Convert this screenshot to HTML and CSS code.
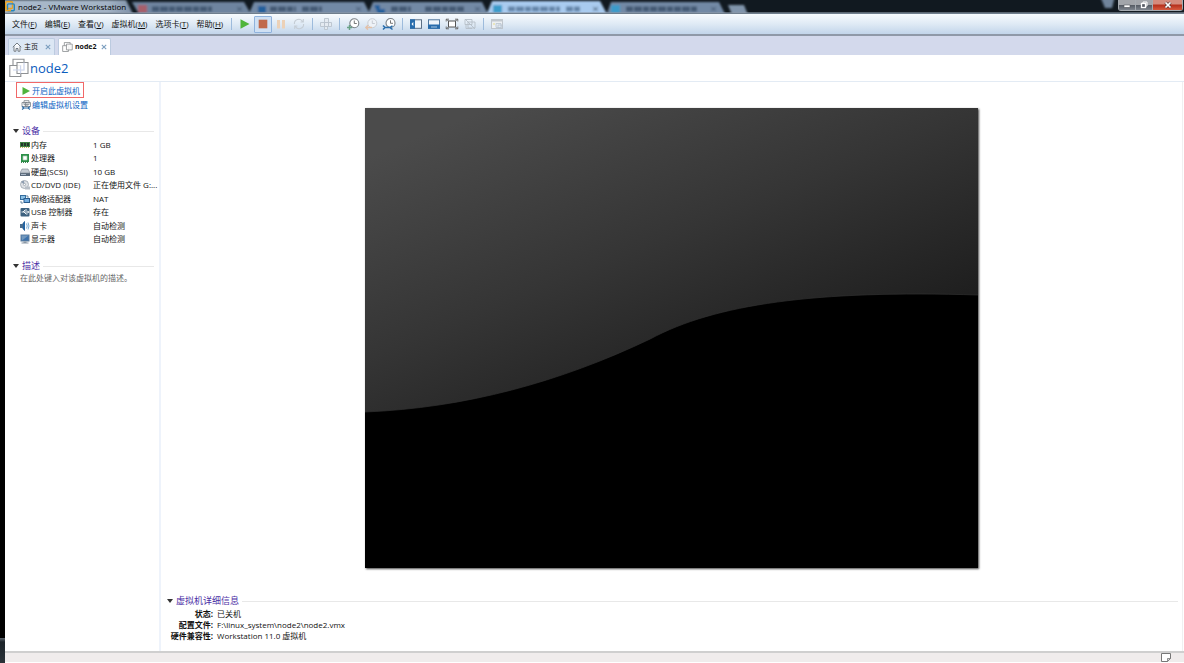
FILE: index.html
```html
<!DOCTYPE html>
<html lang="zh-CN">
<head>
<meta charset="utf-8">
<title>node2 - VMware Workstation</title>
<link rel="stylesheet" href="styles.css">
</head>
<body>
<div class="window">
  <header class="titlebar">
    <svg class="backdrop" width="1179" height="13" viewBox="5 0 1179 13" aria-hidden="true">
      <defs>
        <filter id="soft" x="-5%" y="-50%" width="110%" height="200%"><feGaussianBlur stdDeviation="1.2"/></filter>
        <linearGradient id="glow" x1="0" x2="1" y1="0" y2="0"><stop offset="0" stop-color="#a9bacb"/><stop offset=".8" stop-color="#a3b3c5"/><stop offset="1" stop-color="#7d8fa6"/></linearGradient>
      </defs>
      <rect x="0" width="1184" height="13" fill="#111920"/>
      <g filter="url(#soft)">
        <path d="M0 0H126L134 16H0Z" fill="url(#glow)"/>
        <path d="M132 2H244L252 16H140Z" fill="#6e849f"/>
        <path d="M254 2H364L371 16H248Z" fill="#7289a5"/>
        <path d="M373 2H482L489 16H367Z" fill="#7289a5"/>
        <path d="M492 1H600L608 16H486Z" fill="#a9cbef"/>
        <path d="M611 2H719L726 16H606Z" fill="#7289a5"/>
        <path d="M728 5H744L748 15H732Z" fill="#8195ac"/>
        <path d="M1100 -4H1115L1112 8H1105Z" fill="#70849b"/>
        <g stroke="#435972" stroke-width="5" stroke-dasharray="7 1 8 1 6 1">
          <path d="M152 9H212M270 9H296M302 9H322M391 9H411M425 9H464M626 9H698"/>
          <path d="M508 9H560M566 9H580" stroke="#6384a8"/>
        </g>
        <path d="M138 5h9v8h-9z" fill="#a75e6a"/>
        <path d="M258 6h8v7h-8zM374 5h6v4h5v5h-7z" fill="#245e9b"/>
        <path d="M493 5h9v8h-9zM611 5h9v8h-9z" fill="#3b9bca"/>
        <path d="M237 7l5 4m0-4l-5 4M356 7l5 4m0-4l-5 4M475 7l5 4m0-4l-5 4M593 7l5 4m0-4l-5 4M711 7l5 4m0-4l-5 4" stroke="#40566f"/>
      </g>
      <rect x="5" y="12" width="1179" height="1" fill="#8d9aa8" fill-opacity=".6"/>
    </svg>
    <svg class="app-icon" width="10" height="11" viewBox="0 0 10 11" aria-hidden="true"><rect x=".7" y=".7" width="6.8" height="6.8" rx="1" fill="none" stroke="#eba21e" stroke-width="1.4"/><rect x="2.5" y="2.9" width="6.8" height="6.8" rx="1" fill="none" stroke="#2586bd" stroke-width="1.4"/><path d="M1 5v4.5h5" fill="none" stroke="#eba21e" stroke-width="1.4"/></svg>
    <h1 class="app-title">node2 - VMware Workstation</h1>
    <div class="controls">
      <button class="control" aria-label="最小化"><svg width="8" height="8" viewBox="0 0 8 8"><rect x="1" y="4" width="6" height="2.4" fill="#fff" stroke="#53565c" stroke-width=".6"/></svg></button>
      <button class="control" aria-label="还原"><svg width="8" height="8" viewBox="0 0 8 8"><path d="M3 2V1h4v4H6" fill="none" stroke="#fff"/><rect x="1.5" y="2.5" width="4" height="4" fill="#555a63" stroke="#fff" stroke-width="1.3"/></svg></button>
      <button class="control close" aria-label="关闭"><svg width="8" height="8" viewBox="0 0 8 8"><path d="M1.5 1.5l5 5m0-5l-5 5" stroke="#5b3535" stroke-width="3"/><path d="M1.5 1.5l5 5m0-5l-5 5" stroke="#fff" stroke-width="1.7"/></svg></button>
    </div>
  </header>

  <div class="menubar">
    <nav class="menus">
      <button class="menu">文件(<u>F</u>)</button>
      <button class="menu">编辑(<u>E</u>)</button>
      <button class="menu">查看(<u>V</u>)</button>
      <button class="menu">虚拟机(<u>M</u>)</button>
      <button class="menu">选项卡(<u>T</u>)</button>
      <button class="menu">帮助(<u>H</u>)</button>
    </nav>
    <div class="tools">
      <span class="sep"></span>
      <button class="tool" aria-label="开机"><svg width="14" height="14" viewBox="0 0 14 14"><path d="M2.5 2.2L11.5 7l-9 4.8z" fill="#4fb53b"/></svg></button>
      <button class="tool active" aria-label="关机"><svg width="14" height="14" viewBox="0 0 14 14"><rect x="2.7" y="2.7" width="8.6" height="8.6" fill="#c0694a"/></svg></button>
      <button class="tool" aria-label="挂起"><svg width="14" height="14" viewBox="0 0 14 14"><path d="M3 3h3v8.5H3zM8 3h3v8.5H8z" fill="#ecd1b7"/></svg></button>
      <button class="tool" aria-label="重新启动"><svg width="14" height="14" viewBox="0 0 14 14"><path d="M2.4 7A4.4 4.4 0 0 1 10.6 4.5M11.6 7A4.4 4.4 0 0 1 3.4 9.5M11.3 2v3H8.6M2.7 12V9h2.7" fill="none" stroke="#c5cdd5" stroke-width="1.1"/></svg></button>
      <span class="sep"></span>
      <button class="tool" aria-label="发送按键"><svg width="14" height="14" viewBox="0 0 14 14"><path d="M5.500 1.500h4v4h-4zM1.500 5.500h4v4h-4zM5.500 5.500h4v4h-4zM9.500 5.500h3v4h-3zM5.500 9.500h3v3h-3z" fill="#e4eaf1" stroke="#b9c3cd" stroke-width=".9"/></svg></button>
      <span class="sep"></span>
      <button class="tool" aria-label="拍摄快照"><svg width="14" height="14" viewBox="0 0 14 14"><circle cx="8.300" cy="6.200" r="4.500" fill="#fff" stroke="#7b8288" stroke-width="1.100"/><path d="M8.300 3.500v3h2.500" fill="none" stroke="#555" stroke-width=".8"/><path d="M1 10.500h5M3.500 8v5" stroke="#69a286" stroke-width="1.500"/></svg></button>
      <button class="tool" aria-label="恢复快照"><svg width="14" height="14" viewBox="0 0 14 14"><circle cx="8.300" cy="6.200" r="4.500" fill="#eef2f7" stroke="#c8cdd3"/><path d="M8.300 3.500v3h2.500" fill="none" stroke="#bcc2c9" stroke-width=".8"/><path d="M8 10.500H2M4 8.300L1.800 10.500 4 12.700" fill="none" stroke="#e3c1a8" stroke-width="1.300"/></svg></button>
      <button class="tool" aria-label="管理快照"><svg width="14" height="14" viewBox="0 0 14 14"><circle cx="8.500" cy="6" r="4.500" fill="#fff" stroke="#7b8288" stroke-width="1.100"/><path d="M8.500 3.300v3H11" fill="none" stroke="#555" stroke-width=".8"/><path d="M1 8.500l2 2-2 2M3 10.500h5M10.500 8.800L8 10.500l2.500 2" fill="none" stroke="#286dac" stroke-width="1.500"/></svg></button>
      <span class="sep"></span>
      <button class="tool" aria-label="显示库"><svg width="14" height="14" viewBox="0 0 14 14"><rect x="1.500" y="2.800" width="11" height="8.500" fill="#eef4fa" stroke="#5b6f85"/><path d="M1 2.300h5v9.500H1z" fill="#286cac"/><path d="M4.300 5L2.500 7l1.800 2" fill="#fff"/></svg></button>
      <button class="tool" aria-label="显示缩略图"><svg width="14" height="14" viewBox="0 0 14 14"><rect x="1.500" y="2.800" width="11" height="8.500" fill="#eef4fa" stroke="#52789e"/><path d="M1 7.500h12v4.300H1z" fill="#286cac"/><path d="M4 10h6" stroke="#b7d1e8" stroke-width=".9"/></svg></button>
      <button class="tool" aria-label="全屏"><svg width="14" height="14" viewBox="0 0 14 14"><rect x="3.500" y="4" width="7" height="6" fill="#fff" stroke="#555"/><path d="M1.200 4.500V2.200H4M10 2.200h2.800v2.300M12.800 9.500v2.300H10M4 11.800H1.200V9.500M1.200 2.200l2.300 1.800m9.300-1.800L10.500 4m2.300 7.800L10.500 10m-9.300 1.800L3.500 10" fill="none" stroke="#666" stroke-width=".9"/></svg></button>
      <button class="tool" aria-label="Unity"><svg width="14" height="14" viewBox="0 0 14 14"><path d="M2 2.500h7v5H2zM5 5h7v6H5zM3 8v3.500h6M2 2l10 10" fill="none" stroke="#b6bec7" stroke-width=".9"/></svg></button>
      <span class="sep"></span>
      <button class="tool" aria-label="控制台视图"><svg width="14" height="14" viewBox="0 0 14 14"><rect x="1.500" y="2.500" width="11" height="9" fill="#edf0f3" stroke="#bfc5cc"/><path d="M1 2h12v2.500H1z" fill="#c2c8ce"/><path d="M6 6.500h5v4H6zM8 8h4v3H8z" fill="#e4eaf0" stroke="#b7c4d0" stroke-width=".8"/><path d="M3 6h2v2H3z" fill="#eae6be"/></svg></button>
    </div>
  </div>

  <div class="tabs" role="tablist">
    <div class="tab">
      <svg width="10" height="10" viewBox="0 0 10 10" aria-hidden="true"><path d="M.8 5.200L5 1l4.200 4.200M2 4.500v4.700h2V6.500h2v2.700h2V4.500" fill="#fff" stroke="#687078" stroke-width=".9"/></svg>
      <button class="tab-name" role="tab">主页</button>
      <button class="tab-close" aria-label="关闭主页"><svg width="6" height="6" viewBox="0 0 6 6"><path d="M.8.8l4.400 4.400m0-4.400L.8 5.200" stroke="#7b9ebf" stroke-width="1.100"/></svg></button>
    </div>
    <div class="tab current">
      <svg width="11" height="10" viewBox="0 0 20 19" aria-hidden="true"><g stroke="#8e9194" stroke-width="1.600"><path d="M4 .8h11v11H4z" fill="#fff"/><path d="M.8 7h11v11H.8z" fill="#fff"/><path d="M8 4h11v11H8z" fill="#fff" fill-opacity=".85"/></g></svg>
      <button class="tab-name" role="tab" aria-selected="true">node2</button>
      <button class="tab-close" aria-label="关闭 node2"><svg width="6" height="6" viewBox="0 0 6 6"><path d="M.8.8l4.400 4.400m0-4.400L.8 5.200" stroke="#7b9ebf" stroke-width="1.100"/></svg></button>
    </div>
  </div>

  <div class="heading">
    <svg width="20" height="20" viewBox="0 0 20 19" aria-hidden="true"><g stroke="#8e9194" stroke-width="1.100"><path d="M4 .8h11v11H4z" fill="#fff"/><path d="M.8 7h11v11H.8z" fill="#fff"/><path d="M8 4h11v11H8z" fill="#fff" fill-opacity=".85"/><path d="M4 11.500h7.500M11.500 7v8M8 11.500h7V4" fill="none" stroke="#ccd6ee"/></g></svg>
    <h2 class="vm-name">node2</h2>
  </div>

  <main class="main">
    <aside class="sidebar">
      <a class="command marked" href="#"><svg width="10" height="10" viewBox="0 0 10 10" aria-hidden="true"><path d="M1.500 1L9 5 1.500 9z" fill="#4fb53b"/></svg>开启此虚拟机</a>
      <a class="command" href="#"><svg width="10" height="10" viewBox="0 0 10 10" aria-hidden="true"><path d="M3 .7h5v4H3zM1 2.500h5v4H1zM4.500 2.500h5v4h-5z" fill="#fff" stroke="#777f87" stroke-width=".8"/><path d="M1 6.500l2 1.500-2 1.500M3 8h4M9 6.500L7 8l2 1.500" fill="none" stroke="#2c6ba5" stroke-width="1.200"/></svg>编辑虚拟机设置</a>

      <section class="group devices">
        <h3 class="group-title">设备</h3>
        <table class="device-table">
          <tr><th><svg width="10" height="10" viewBox="0 0 10 10"><path d="M0 2h10v5H0z" fill="#3f8143"/><path d="M1 3h2v3H1zM4 3h2v3H4zM7 3h2v3H7z" fill="#23372b"/><path d="M0 7.500h10" stroke="#c5b55d" stroke-dasharray="1 1"/></svg>内存</th><td>1 GB</td></tr>
          <tr><th><svg width="10" height="10" viewBox="0 0 10 10"><rect x="1" y="1" width="8" height="8" fill="#2c9149"/><path d="M3 3h4v4H3z" fill="#fff" stroke="#a9cbb1" stroke-width=".7"/><path d="M1 9.300h8" stroke="#14652e" stroke-dasharray="1 1"/></svg>处理器</th><td>1</td></tr>
          <tr><th><svg width="10" height="10" viewBox="0 0 10 10"><path d="M2 2h6l2 4v3H0V6z" fill="#c6ccd3"/><path d="M0 6h10v3H0z" fill="#596879"/><path d="M2 2h6l2 4H0z" fill="none" stroke="#78838e" stroke-width=".6"/><path d="M1 7.500h5" stroke="#aab7c7"/></svg>硬盘(SCSI)</th><td>10 GB</td></tr>
          <tr><th><svg width="10" height="10" viewBox="0 0 10 10"><circle cx="4.500" cy="4.500" r="4" fill="#dfe2e6" stroke="#9ba3ac" stroke-width=".8"/><path d="M4.500 4.500L1 2A4 4 0 0 1 4 .8z" fill="#8d9db0"/><circle cx="4.500" cy="4.500" r="1.100" fill="#fff" stroke="#858e98" stroke-width=".6"/><path d="M5 6.500h5v3H5z" fill="#b8bfc7"/></svg>CD/DVD (IDE)</th><td>正在使用文件 G:...</td></tr>
          <tr><th><svg width="10" height="10" viewBox="0 0 10 10"><path d="M0 1h6v5H0z" fill="#356d9e"/><path d="M1 2h4v3H1z" fill="#8bc0e4"/><path d="M3.500 4H10v5H3.500z" fill="#285b8d"/><path d="M4.500 5H9v3H4.500z" fill="#76afe0"/><path d="M7 1v2h2M1 7v2h2" fill="none" stroke="#4a6e91" stroke-width=".8"/></svg>网络适配器</th><td>NAT</td></tr>
          <tr><th><svg width="10" height="10" viewBox="0 0 10 10"><rect x=".5" y="1" width="9" height="8.500" rx="1" fill="#3d617f"/><path d="M1.500 5h6M3 5l2-2h2M4 5l2 2h1.500" fill="none" stroke="#fff" stroke-width=".9"/><path d="M7.500 3.500L9.500 5l-2 1.500z" fill="#fff"/></svg>USB 控制器</th><td>存在</td></tr>
          <tr><th><svg width="10" height="10" viewBox="0 0 10 10"><path d="M0 3h2l3-3v10L2 7H0z" fill="#496c8d"/><path d="M3 2l2-2v10L3 8z" fill="#2464a2"/><path d="M6.500 2.500q1.500 2.500 0 5M8 1.500q2 3.500 0 7" fill="none" stroke="#6aa0cd" stroke-width=".9"/></svg>声卡</th><td>自动检测</td></tr>
          <tr><th><svg width="10" height="10" viewBox="0 0 10 10"><path d="M.5.500h9v7h-9z" fill="#5f7c9b"/><path d="M1.500 1.500h7v5h-7z" fill="#3d72ac"/><path d="M1.500 1.500h7L2 6.500z" fill="#7298bd"/><path d="M3.500 7.500h3v1h2v1h-7v-1h2z" fill="#8b98a5"/></svg>显示器</th><td>自动检测</td></tr>
        </table>
      </section>

      <section class="group">
        <h3 class="group-title">描述</h3>
        <p class="description">在此处键入对该虚拟机的描述。</p>
      </section>
    </aside>

    <section class="content">
      <div class="stage">
        <svg class="screen" viewBox="0 0 613 460" preserveAspectRatio="none" role="img" aria-label="虚拟机屏幕">
          <defs><linearGradient id="shade" gradientUnits="userSpaceOnUse" x1="50" y1="30" x2="190" y2="375"><stop offset="0" stop-color="#4b4b4b"/><stop offset=".5" stop-color="#353535"/><stop offset="1" stop-color="#1c1c1c"/></linearGradient></defs>
          <rect width="613" height="460" fill="url(#shade)"/>
          <path d="M0 304C100 300 195 274 285 231C350 196 450 182 613 187V460H0Z" fill="#000"/>
          <path d="M0 304C100 300 195 274 285 231C350 196 450 182 613 187" fill="none" stroke="#303030" stroke-width=".7"/>
        </svg>
      </div>
      <section class="details">
        <h3 class="group-title">虚拟机详细信息</h3>
        <dl class="facts">
          <dt>状态:</dt><dd>已关机</dd>
          <dt>配置文件:</dt><dd>F:\linux_system\node2\node2.vmx</dd>
          <dt>硬件兼容性:</dt><dd>Workstation 11.0 虚拟机</dd>
        </dl>
      </section>
    </section>
  </main>

  <footer class="statusbar">
    <button class="message" aria-label="消息日志"><svg width="10" height="9" viewBox="0 0 10 9"><path d="M.5.500h9v5l-3 3h-6z" fill="#fff" stroke="#777"/><path d="M9.500 5.500h-3v3z" fill="#ddd" stroke="#777" stroke-width=".8"/></svg></button>
  </footer>
</div>
</body>
</html>
```

FILE: styles.css
```css
* { box-sizing: border-box; }

body {
  margin: 0;
  background: linear-gradient(#5d666e, #1d242a 4px, #2a3238) left bottom / 5px 25px no-repeat #000;
  color: #111;
  font: 8px/10px "Open Sans", "Noto Sans CJK SC", sans-serif;
}

h1, h2, h3, p, dl, dd { margin: 0; font-weight: normal; }

button {
  margin: 0;
  padding: 0;
  border: 0;
  background: none;
  color: inherit;
  font: inherit;
}

svg { display: block; flex: none; }

.window {
  display: flex;
  flex-direction: column;
  min-height: 100vh;
  margin-left: 5px;
  background: #fff;
}

/* Glass title bar */
.titlebar {
  position: relative;
  display: flex;
  align-items: center;
  height: 13px;
  overflow: hidden;
  background: #111920;
}
.backdrop { position: absolute; top: 0; left: 0; }
.app-icon { position: relative; }
.app-title {
  position: relative;
  margin-left: 3px;
  font-size: 8px;
  color: #000;
}
.controls {
  position: relative;
  display: flex;
  align-self: flex-start;
  height: 11px;
  margin-left: auto;
  margin-right: 1px;
  border: 1px solid #a5abb1;
  border-top: 0;
  border-radius: 0 0 3px 3px;
}
.control {
  display: grid;
  place-items: center;
  width: 17px;
  border-right: 1px solid #a5abb1;
  background: linear-gradient(#a2a5aa 45%, #535962 50%, #7e858e);
}
.close {
  width: 29px;
  border: 0;
  background: linear-gradient(#d58b7d 40%, #b52f1b 50%, #d65a40);
}

/* Menu bar and tool bar */
.menubar {
  display: flex;
  align-items: center;
  height: 23px;
  padding-left: 7px;
  border-top: 1px solid #6f7e8d;
  border-bottom: 2px solid #8f99a8;
  background: linear-gradient(#f7fbfe, #dfeaf5 50%, #c2d5ea);
}
.menus { display: flex; gap: 8px; white-space: nowrap; }
.tools { display: flex; align-items: center; margin-left: 4px; }
.tool {
  display: grid;
  place-items: center;
  width: 18px;
  height: 17px;
}
.active {
  border: 1px solid #8fb2dc;
  border-radius: 1px;
  background: #cfe0f3;
}
.sep { width: 1px; height: 12px; margin: 0 4px; background: #9dbbdc; }

/* Document tabs */
.tabs {
  display: flex;
  align-items: flex-end;
  gap: 3px;
  height: 19px;
  padding-left: 3px;
  background: #d3d9ec;
}
.tab {
  display: flex;
  align-items: center;
  gap: 2px;
  min-width: 47px;
  height: 17px;
  padding: 0 3px;
  border: 1px solid #bccbe0;
  border-bottom: 0;
  border-radius: 2px 2px 0 0;
  background: #dce7f4;
}
.current { min-width: 53px; background: #fff; font-weight: bold; }
.tab-name { font-size: 7px; }
.tab-close { margin-left: auto; }

.heading {
  display: flex;
  align-items: center;
  gap: 1px;
  height: 27px;
  padding-left: 4px;
  border-bottom: 1px solid #e3ebf4;
}
.vm-name { font-size: 13px; line-height: 20px; color: #0b5cbd; }

.main { display: flex; flex: 1; margin-right: 1px; border-right: 1px solid #f0f0f0; }

/* Side panel */
.sidebar {
  flex: none;
  width: 156px;
  border-right: 2px solid #eef3fb;
}
.command {
  display: flex;
  align-items: center;
  gap: 1px;
  width: max-content;
  height: 14px;
  margin-left: 11px;
  padding: 0 3px 0 4px;
  border: 1px solid transparent;
  color: #0b63c4;
  text-decoration: none;
}
.marked { height: 16px; padding-top: 1px; border-color: #f16868; }

.group { padding: 12px 5px 0 8px; }
.devices { padding-bottom: 1px; }
.group-title {
  display: flex;
  align-items: center;
  gap: 3px;
  font-size: 9px;
  line-height: 14px;
  color: #4a2ea5;
}
.group-title::before {
  border: 3px solid transparent;
  border-top: 4px solid #333;
  border-bottom: 0;
  content: "";
}
.group-title::after { flex: 1; height: 1px; background: #e8e8e8; content: ""; }

.device-table {
  width: 100%;
  height: 108px;
  border-collapse: collapse;
  white-space: nowrap;
}
.device-table th, .device-table td { padding: 0; font-weight: normal; text-align: left; }
.device-table th {
  display: flex;
  align-items: center;
  gap: 1px;
  width: 80px;
  height: 13px;
  padding-left: 7px;
}
.description { padding-left: 7px; color: #666; }

/* Screen preview and details */
.content { display: flex; flex: 1; flex-direction: column; min-width: 0; }
.stage {
  display: flex;
  flex: 1 0 0;
  justify-content: center;
  min-height: 0;
  padding: 26px 0;
}
.screen { height: 100%; aspect-ratio: 4 / 3; box-shadow: 1px 1px 2px #444; }
.details { padding: 0 4px 10px 6px; }
.facts {
  display: grid;
  grid-template-columns: 46px 1fr;
  column-gap: 4px;
  line-height: 11px;
}
.facts dt { font-weight: bold; text-align: right; white-space: nowrap; }

.statusbar {
  display: flex;
  justify-content: flex-end;
  align-items: center;
  height: 12px;
  padding-right: 13px;
  border-top: 2px solid #cfcfcf;
  border-bottom: 1px solid #fff;
  background: #f0ecec;
}
```
